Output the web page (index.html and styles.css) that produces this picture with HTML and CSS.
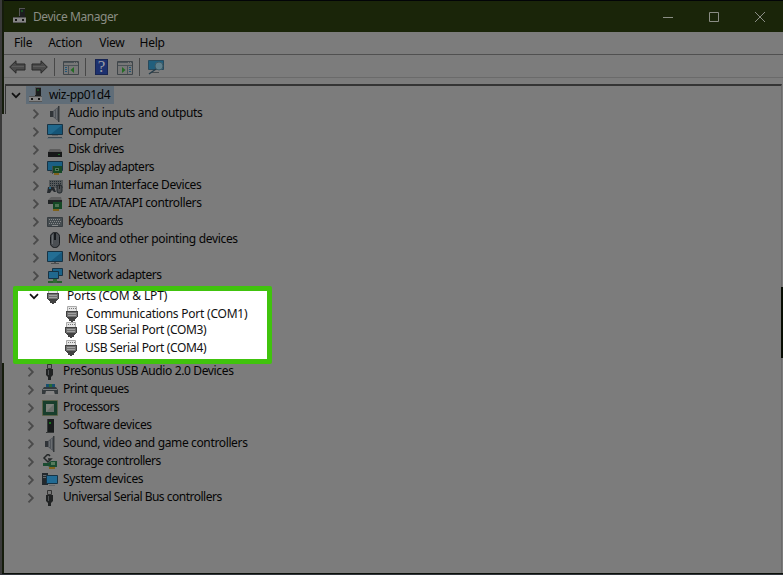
FILE: index.html
```
<!DOCTYPE html>
<html lang="en">
<head>
<meta charset="utf-8">
<title>Device Manager</title>
<link rel="stylesheet" href="styles.css">
</head>
<body>
<svg class="defs" aria-hidden="true">
  <symbol id="right" viewBox="0 0 8 12"><path d="M1.5 1.7 5.8 6l-4.3 4.3" fill="none" stroke="#4a4a4a" stroke-width="1.8"/></symbol>
  <symbol id="down" viewBox="0 0 10 7"><path d="m1 1.2 4 4 4-4" fill="none" stroke="currentColor" stroke-width="1.7"/></symbol>
  <symbol id="pc" viewBox="0 0 16 16"><path d="M7 0h6v9H7z" fill="#1b1d1e"/><path d="M7 0h1v8H7zM7 0h6v1H7z" fill="#555"/><path d="M9 2h2v2H9z" fill="#174d20"/><path d="M1 9h13v6H1z" fill="#858585"/><path d="M1 9h13v1H1zM1 14h13v1H1z" fill="#555"/><path d="M3 11h2v2H3zm7 0h2v2h-2z" fill="#161616"/></symbol>
  <symbol id="audio" viewBox="0 0 16 16"><path d="M3 5h3v6H3z" fill="#303438"/><path d="m6 5 5-4v14l-5-4z" fill="#50545a"/><path d="M7.500 5v6M9.500 3v10" stroke="#696d70"/><path d="M11 0h1.500v16H11z" fill="#34383b"/></symbol>
  <symbol id="computer" viewBox="0 0 16 16"><path d="M.5.5h15v10H.5z" fill="#155577" stroke="#173344"/><path d="M1 1h14L4 10H1z" fill="#21688c"/><path d="M5 11h6v1H5z" fill="#606568"/><path d="M1 13.5h14" stroke="#3d4a52"/><path d="M0 14.5h16" stroke="#68747a"/></symbol>
  <symbol id="disk" viewBox="0 0 16 16"><path d="M3 7h10l2 3H1z" fill="#5c5c5c"/><path d="M1 10h14v5H1z" fill="#171819"/><path d="M11 12h2v1h-2z" fill="#1c6b26"/></symbol>
  <symbol id="display" viewBox="0 0 16 16"><path d="M.5 1.5h15v9H.5z" fill="#1b6084" stroke="#173344"/><path d="M6 6h9v7H6z" fill="#164825"/><path d="M8 8h4v3H8z" fill="#507858"/><path d="M9 9h2v1H9z" fill="#122c18"/><path d="M7 13h5v2H7z" fill="#80621b"/><path d="M5.500 6v8M3 12h3" stroke="#454a4d"/></symbol>
  <symbol id="hid" viewBox="0 0 16 16"><path d="M2 2h14v8H2z" fill="#55595b"/><path d="M3 3.500h12M3 5.500h12M3 7.500h12" stroke="#222b31" stroke-dasharray="1 1"/><path d="M1 9h6l2 5H7l-2-2-2 3H0z" fill="#262a2e"/><circle cx="3" cy="10" r="1" fill="#287aa0"/><rect x="10" y="7" width="5" height="8" rx="2" fill="#4b4e51" stroke="#20272b"/><path d="M12.5 7v4" stroke="#222"/></symbol>
  <symbol id="ide" viewBox="0 0 16 16"><path d="m1 4 3-3h10l1 4v3H1z" fill="#606060"/><path d="M1 4h14v4H1z" fill="#202324"/><path d="M6 6h9v7H6z" fill="#154825"/><path d="M8 8h4v3H8z" fill="#4c7252"/><path d="M6 13h6v2H6z" fill="#80621b"/></symbol>
  <symbol id="keyboard" viewBox="0 0 16 16"><path d="M.5 3.5h15v9H.5z" fill="#454c50" stroke="#373d41"/><path d="M2 5.5h12M3 7.5h11M2 9.5h12" stroke="#858889" stroke-dasharray="1 1"/><path d="M5 11.500h6" stroke="#858889"/></symbol>
  <symbol id="mouse" viewBox="0 0 16 16"><rect x="3.5" y=".5" width="9" height="15" rx="4.2" fill="#4b4f53" stroke="#171a1d"/><path d="M5.500 3v9" stroke="#696d70"/><path d="M8 1v7" stroke="#171a1d" stroke-width="2"/></symbol>
  <symbol id="monitor" viewBox="0 0 16 16"><path d="M.5 1.5h15v10H.5z" fill="#18597d" stroke="#173344"/><path d="M1 2h14L4 11H1z" fill="#246e94"/><path d="M7 12h2v1H7zM4 13h8v1H4z" fill="#4c4f50"/></symbol>
  <symbol id="network" viewBox="0 0 16 16"><path d="M5.5.5h10v7h-10z" fill="#1b6389" stroke="#173344"/><path d="M1.500 3.500h10v7h-10z" fill="#21698f" stroke="#173344"/><path d="M1 13h14v2H1z" fill="#275d2e"/><path d="M6 11h4v4H6z" fill="#306b35"/></symbol>
  <symbol id="port" viewBox="0 0 16 16"><path d="M3.500.5h9v5h-9z" fill="#e5e5e5" stroke="#aaa"/><path d="M5 2.500h7" stroke="#777" stroke-dasharray="1 1"/><path d="M2 5h12v6h-1v1h-1v1H4v-1H3v-1H2z" fill="#414141"/><path d="M3 6h10v5H3z" fill="#707070"/><path d="M4 7.500h8M4 9.500h8" stroke="#a0a0a0"/><path d="M5 12h2v3H5zm4 0h2v3H9zM7 12h2v4H7z" fill="#414141"/></symbol>
  <symbol id="usb" viewBox="0 0 16 16"><path d="M5.500.5h4v4h-4z" fill="#777" stroke="#333"/><path d="M4 5h7v6l-2 2v3H6v-3l-2-2z" fill="#202223"/><path d="M6.500 6v5" stroke="#505355"/></symbol>
  <symbol id="printer" viewBox="0 0 16 16"><path d="M4 2h9v4H4z" fill="#164f70"/><path d="M7 2h3v3H7z" fill="#246935"/><path d="M2 5h12l2 3v4H0V8z" fill="#343a3d"/><path d="M1 7h14v1H1z" fill="#757879"/><path d="M4 9h8l1 4H3z" fill="#858585"/></symbol>
  <symbol id="cpu" viewBox="0 0 16 16"><path d="M.5.5h15v15H.5z" fill="#244d38" stroke="#655f37" stroke-dasharray="1 1"/><path d="M1 1h14v14H1z" fill="#183e2c"/><path d="M4 4h8v8H4z" fill="#6a706b"/><path d="M4 12 12 4H4z" fill="#7d817b"/></symbol>
  <symbol id="software" viewBox="0 0 16 16"><path d="M5 1h7v13H5z" fill="#171a1b"/><path d="M4 14h8v1H4zM5 1h1v13H5z" fill="#343737"/><path d="M7 4h2v2H7z" fill="#18721d"/></symbol>
  <symbol id="storage" viewBox="0 0 16 16"><path d="M8 2 6 0 2 4l4 4 3-3H6" fill="none" stroke="#242728" stroke-width="1.500"/><path d="M1 9h5l3-2h6v6H8l-2-1H1z" fill="#1b4c31"/><path d="M9 8h4v3H9z" fill="#567b5c"/><path d="M7 13h6v2H7z" fill="#80621b"/></symbol>
  <symbol id="system" viewBox="0 0 16 16"><path d="M0 1h6v12H0z" fill="#23292d"/><path d="M1 3.500h4M1 5.500h4" stroke="#646a6d"/><path d="M4.500 3.500h11v8h-11z" fill="#216b94" stroke="#173344"/><path d="M7 13h6v1H7z" fill="#62676a"/></symbol>
  <symbol id="back" viewBox="0 0 17 14"><path d="M.7 7 7 .8v3.200h9v6H7v3.200z" fill="#4a4a4a" stroke="#292929"/><path d="M3 6.500h12" stroke="#5c5c5c"/></symbol>
  <symbol id="panel" viewBox="0 0 16 14"><path d="M.5.5h15v13H.5z" fill="#777" stroke="#40464a"/><path d="M1 1.500h10M1 4.500h14" stroke="#4b5358"/><path d="M12 1.500h3" stroke="#4b5358" stroke-dasharray="1 1"/></symbol>
</svg>

<main class="window">
  <header class="titlebar">
    <svg class="icon"><use href="#pc"/></svg>
    <h1>Device Manager</h1>
    <div class="controls">
      <svg viewBox="0 0 12 12"><path d="M1 6.500h10"/></svg>
      <svg viewBox="0 0 12 12"><path d="M1.500 1.500h9v9h-9z"/></svg>
      <svg viewBox="0 0 12 12"><path d="m1 1 10 10M11 1 1 11"/></svg>
    </div>
  </header>
  <nav class="menu"><span>File</span><span>Action</span><span>View</span><span>Help</span></nav>
  <div class="toolbar">
    <svg class="arrow"><use href="#back"/></svg>
    <svg class="arrow forward"><use href="#back"/></svg>
    <i class="separator"></i>
    <svg class="tool" viewBox="0 0 16 14"><use href="#panel"/><path d="M5.500 5v8" stroke="#4b5358"/><path d="M2 6.500h2M2 8.500h2M2 10.500h2" stroke="#205678"/><path d="M11 6v6L7.500 9z" fill="#246b24"/></svg>
    <i class="separator second"></i>
    <span class="help">?</span>
    <svg class="tool properties" viewBox="0 0 16 14"><use href="#panel"/><path d="M10.500 5v8" stroke="#4b5358"/><path d="M12 6.500h2M12 8.500h2M12 10.500h2" stroke="#205678"/><path d="M5 6v6l3.500-3z" fill="#246b24"/></svg>
    <i class="separator third"></i>
    <svg class="scan" viewBox="0 0 18 15"><path d="M1.500.5h15v9h-15z" fill="#215f7d" stroke="#294a5c"/><path d="M4 12h8v1H4z" fill="#454b4e"/><circle cx="12" cy="6" r="4" fill="#5d7f8c" stroke="#3c5965"/><path d="m9 9-7 5" stroke="#263d4b" stroke-width="1.500"/></svg>
  </div>
  <section class="tree">
    <div class="root"><svg class="down"><use href="#down"/></svg><span class="selected"><svg class="icon"><use href="#pc"/></svg><span>wiz-pp01d4</span></span></div>
    <ul class="group">
      <li><svg class="right"><use href="#right"/></svg><svg class="icon"><use href="#audio"/></svg><span>Audio inputs and outputs</span></li>
      <li><svg class="right"><use href="#right"/></svg><svg class="icon"><use href="#computer"/></svg><span>Computer</span></li>
      <li><svg class="right"><use href="#right"/></svg><svg class="icon"><use href="#disk"/></svg><span class="tight">Disk drives</span></li>
      <li><svg class="right"><use href="#right"/></svg><svg class="icon"><use href="#display"/></svg><span class="tight">Display adapters</span></li>
      <li><svg class="right"><use href="#right"/></svg><svg class="icon"><use href="#hid"/></svg><span>Human Interface Devices</span></li>
      <li><svg class="right"><use href="#right"/></svg><svg class="icon"><use href="#ide"/></svg><span>IDE ATA/ATAPI controllers</span></li>
      <li><svg class="right"><use href="#right"/></svg><svg class="icon"><use href="#keyboard"/></svg><span class="tight">Keyboards</span></li>
      <li><svg class="right"><use href="#right"/></svg><svg class="icon"><use href="#mouse"/></svg><span class="loose">Mice and other pointing devices</span></li>
      <li><svg class="right"><use href="#right"/></svg><svg class="icon"><use href="#monitor"/></svg><span>Monitors</span></li>
      <li><svg class="right"><use href="#right"/></svg><svg class="icon"><use href="#network"/></svg><span class="tight">Network adapters</span></li>
    </ul>
    <div class="callout">
      <div class="ports"><svg class="down"><use href="#down"/></svg><svg class="icon"><use href="#port"/></svg><span>Ports (COM &amp; LPT)</span></div>
      <div class="port first"><svg class="icon"><use href="#port"/></svg><span>Communications Port (COM1)</span></div>
      <div class="port second-port"><svg class="icon"><use href="#port"/></svg><span>USB Serial Port (COM3)</span></div>
      <div class="port"><svg class="icon"><use href="#port"/></svg><span>USB Serial Port (COM4)</span></div>
    </div>
    <ul class="group lower">
      <li><svg class="right"><use href="#right"/></svg><svg class="icon"><use href="#usb"/></svg><span>PreSonus USB Audio 2.0 Devices</span></li>
      <li><svg class="right"><use href="#right"/></svg><svg class="icon"><use href="#printer"/></svg><span class="tight">Print queues</span></li>
      <li><svg class="right"><use href="#right"/></svg><svg class="icon"><use href="#cpu"/></svg><span class="tight">Processors</span></li>
      <li><svg class="right"><use href="#right"/></svg><svg class="icon"><use href="#software"/></svg><span>Software devices</span></li>
      <li><svg class="right"><use href="#right"/></svg><svg class="icon"><use href="#audio"/></svg><span>Sound, video and game controllers</span></li>
      <li><svg class="right"><use href="#right"/></svg><svg class="icon"><use href="#storage"/></svg><span class="tight">Storage controllers</span></li>
      <li><svg class="right"><use href="#right"/></svg><svg class="icon"><use href="#system"/></svg><span>System devices</span></li>
      <li><svg class="right"><use href="#right"/></svg><svg class="icon"><use href="#usb"/></svg><span class="tight">Universal Serial Bus controllers</span></li>
    </ul>
  </section>
  <i class="edge edge-left"></i>
  <i class="edge edge-right"></i>
</main>
</body>
</html>
```
FILE: styles.css
```
* { box-sizing: border-box; }
body { margin: 0; font: 12px/18px "Noto Sans", "Open Sans", sans-serif; letter-spacing: -0.25px; color: #050505; }
svg { display: block; flex: none; }
.defs { position: absolute; width: 0; height: 0; }
.window { position: relative; width: 783px; height: 575px; overflow: hidden; background: #7c7c7c; border-left: 2px solid #3a3a3a; border-bottom: 1px solid #30333a; }
.window::before { content: ""; position: absolute; left: 0; top: 0; width: 2px; height: 574px; background: #151c0c; }
.window::after { content: ""; position: absolute; left: 0; bottom: 0; width: 781px; height: 1px; background: #0b1009; }
.titlebar { height: 32px; display: flex; align-items: center; padding-left: 10px; background: #1a2509; border-top: 1px solid #020407; color: #8a8d84; }
.titlebar h1 { margin: 1px 0 0 5px; font-size: 12px; font-weight: 400; letter-spacing: -0.44px; }
.titlebar .icon { margin-top: -1px; }
.icon { width: 16px; height: 16px; }
.controls { margin-left: auto; padding-right: 17px; display: flex; gap: 34px; }
.controls svg { width: 12px; height: 12px; fill: none; stroke: #8a8d84; }
.menu { height: 23px; display: flex; gap: 16px; padding: 2px 0 0 12px; border-bottom: 1px solid #505050; }
.menu span:nth-child(3) { margin-left: 1px; margin-right: -1px; }
.toolbar { height: 23px; display: flex; align-items: center; padding: 2px 0 0 7px; border-bottom: 1px solid #6a6a6a; }
.arrow { width: 17px; height: 14px; }
.forward { margin-left: 5px; transform: scaleX(-1); }
.separator { width: 1px; height: 18px; margin-left: 6px; background: #484848; }
.tool { width: 16px; height: 14px; margin: 2px 0 0 8px; }
.help { width: 13px; height: 16px; margin-left: 9px; background: #1d316f; border: 1px solid #182552; color: #9a9da5; font: 17px/14px "Liberation Serif", serif; text-align: center; letter-spacing: 0; }
.second { margin-left: 6px; }
.properties { margin-left: 9px; }
.third { margin-left: 6px; }
.scan { width: 18px; height: 15px; margin-left: 7px; }
.tree { height: 490px; margin: 6px 1px 0 3px; border-top: 2px solid #343434; border-right: 1px solid #6b6b6b; }
.root { width: 110px; height: 28px; margin-bottom: -10px; display: flex; align-items: flex-start; padding-left: 5px; border-left: 1px solid #333; color: #111; }
.down { width: 10px; height: 7px; }
.root .down { margin-top: 6px; }
.selected { display: flex; align-items: center; width: 88px; height: 18px; margin-left: 5px; padding-left: 2px; background: #606d78; flex: none; }
.selected > span { margin: -1px 0 0 5px; color: #050505; white-space: nowrap; letter-spacing: -0.34px; }
.group { margin: 0; padding: 1px 0 0 27px; list-style: none; height: 182px; letter-spacing: -0.36px; }
.group li { height: 18px; display: flex; align-items: center; }
.group li > span { margin: -2px 0 0 5px; white-space: nowrap; }
.group .tight { letter-spacing: -0.5px; }
.group .loose { letter-spacing: -0.33px; }
.right { width: 8px; height: 12px; margin-right: 7px; }
.callout { width: 259px; height: 78px; margin: 0 0 0 8px; background: #fff; border: 5px solid #40c30d; border-radius: 2px; overflow: hidden; color: #111; }
.ports, .port { display: flex; align-items: center; height: 18px; white-space: nowrap; }
.ports { margin-top: -4px; padding-left: 11px; letter-spacing: -0.15px; }
.ports .icon { margin-left: 6px; }
.ports span { margin-left: 6px; }
.port { padding-left: 45px; letter-spacing: -0.36px; }
.port span { margin-left: 6px; }
.first { padding-left: 46px; letter-spacing: -0.23px; }
.second-port { margin-top: -2px; }
.lower { height: 145px; padding: 0 0 0 22px; margin-top: -1px; }
.edge { position: absolute; }
.edge-left { left: 0; top: 114px; width: 2px; height: 249px; background: #7c7c7c; }
.edge-right { right: 0; top: 287px; width: 2px; height: 71px; background: #070c03; }
```
